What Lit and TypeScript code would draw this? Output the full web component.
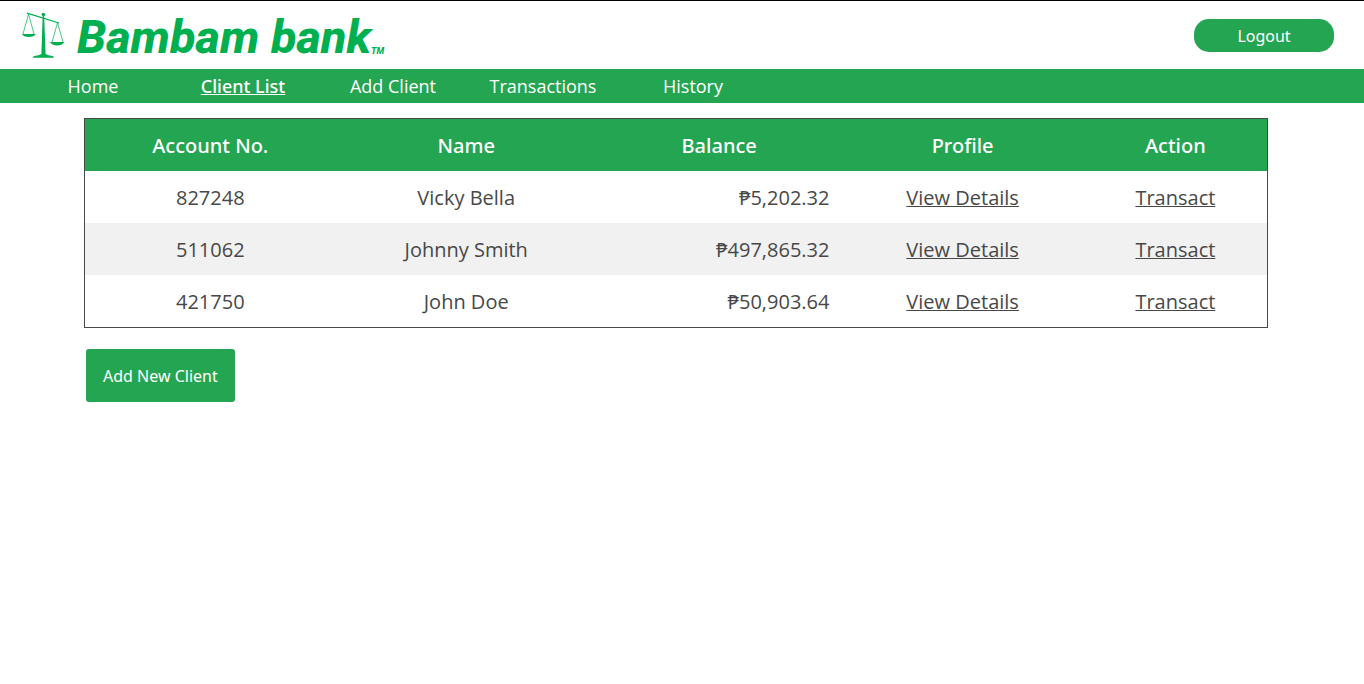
import { LitElement, html, css } from "lit";
import { customElement, state } from "lit/decorators.js";
import { classMap } from "lit/directives/class-map.js";

interface Client {
  account: string;
  name: string;
  balance: number;
}

const peso = (n: number) =>
  "₱" + n.toLocaleString("en-US", { minimumFractionDigits: 2, maximumFractionDigits: 2 });

@customElement("bank-logo")
export class BankLogo extends LitElement {
  static styles = css`
    :host {
      display: flex;
      align-items: flex-end;
      color: #00b050;
      font-family: Roboto, "Liberation Sans", sans-serif;
      font-weight: 800;
      font-style: italic;
    }
    .scales {
      width: 44px;
      height: 48px;
      margin-right: 12px;
    }
    .name {
      font-size: 47px;
      line-height: 44px;
    }
    .mark {
      font-size: 9px;
      line-height: 16px;
    }
  `;

  render() {
    return html`
      <svg class="scales" viewBox="0 0 44 48" aria-hidden="true" fill="none" stroke="currentColor">
        <path d="M6 2.2 L38 12" stroke-width="1.3" />
        <path d="M7.5 3 L2 23 M7.5 3 L13 23 M36.5 12 L31 31 M36.5 12 L42 31" stroke-width=".7" />
        <circle cx="22.4" cy="3.6" r="1.8" fill="currentColor" stroke="none" />
        <path
          d="M.8 23 H14.8 Q13 26 7.8 26 Q2.6 26 .8 23 Z M29 31 H43.4 Q41.6 34.4 36.2 34.4 Q30.8 34.4 29 31 Z"
          fill="currentColor"
          stroke="none"
        />
        <path
          d="M21.7 4 H23.1 L24.6 43 Q27 44.6 31.5 45 Q33 45.4 33 46.8 H11.8 Q11.8 45.4 13.4 45 Q18 44.6 20.4 43 Z"
          fill="currentColor"
          stroke="none"
        />
      </svg>
      <span class="name">Bambam bank</span><span class="mark">TM</span>
    `;
  }
}

@customElement("app-root")
export class AppRoot extends LitElement {
  static styles = css`
    :host {
      display: block;
      border-top: 1px solid #000;
      font-family: "Open Sans", "Noto Sans", sans-serif;
      color: #484848;
    }
    .header {
      display: flex;
      justify-content: space-between;
      align-items: center;
      height: 68px;
      padding: 0 30px 0 21px;
      box-sizing: border-box;
    }
    button {
      border: none;
      background: #24a551;
      color: #fff;
      font-family: "Noto Sans", sans-serif;
      font-size: 16px;
      cursor: pointer;
    }
    .logout {
      width: 140px;
      height: 33px;
      padding: 2px 0 0;
      border-radius: 15px;
    }
    .nav {
      display: flex;
      padding-left: 18px;
      background: #24a551;
    }
    .tab {
      width: 150px;
      text-align: center;
      font-size: 18px;
      line-height: 34px;
      color: #fff;
      text-decoration: none;
    }
    .tab.active {
      font-family: "Noto Sans", sans-serif;
      font-weight: 500;
      text-decoration: underline 1px;
    }
    .content {
      padding: 15px 96px 0 84px;
    }
    .clients {
      width: 100%;
      table-layout: fixed;
      border-spacing: 0;
      border: 1px solid #484848;
      font-size: 20px;
      line-height: 28px;
      text-align: center;
    }
    .account {
      width: 21.2%;
    }
    .client {
      width: 22.1%;
    }
    .balance {
      width: 20.7%;
    }
    .profile {
      width: 20.5%;
    }
    th,
    td {
      box-sizing: border-box;
      padding: 13px 12px 11px;
    }
    th {
      background: #24a551;
      color: #fff;
      font-family: "Noto Sans", sans-serif;
      font-weight: 500;
    }
    .row:nth-child(even) {
      background: #f1f1f1;
    }
    .amount {
      text-align: right;
    }
    .link {
      color: inherit;
      text-decoration: underline 1px;
    }
    .add {
      margin: 21px 2px 0;
      padding: 0 17px;
      height: 53px;
      border-radius: 3px;
    }
  `;

  @state() private active = "Client List";

  private tabs = ["Home", "Client List", "Add Client", "Transactions", "History"];

  private clients: Client[] = [
    { account: "827248", name: "Vicky Bella", balance: 5202.32 },
    { account: "511062", name: "Johnny Smith", balance: 497865.32 },
    { account: "421750", name: "John Doe", balance: 50903.64 },
  ];

  render() {
    return html`
      <header class="header">
        <bank-logo></bank-logo>
        <button class="logout" type="button">Logout</button>
      </header>
      <nav class="nav">
        ${this.tabs.map(
          (tab) => html`<a
            href="#"
            class=${classMap({ tab: true, active: tab === this.active })}
            @click=${() => (this.active = tab)}
            >${tab}</a
          >`
        )}
      </nav>
      <main class="content">
        <table class="clients">
          <thead>
            <tr>
              <th class="account" scope="col">Account No.</th>
              <th class="client" scope="col">Name</th>
              <th class="balance" scope="col">Balance</th>
              <th class="profile" scope="col">Profile</th>
              <th scope="col">Action</th>
            </tr>
          </thead>
          <tbody>
            ${this.clients.map(
              (c) => html`<tr class="row">
                <td>${c.account}</td>
                <td>${c.name}</td>
                <td class="amount">${peso(c.balance)}</td>
                <td><a class="link" href="#">View Details</a></td>
                <td><a class="link" href="#">Transact</a></td>
              </tr>`
            )}
          </tbody>
        </table>
        <button class="add" type="button">Add New Client</button>
      </main>
    `;
  }
}
